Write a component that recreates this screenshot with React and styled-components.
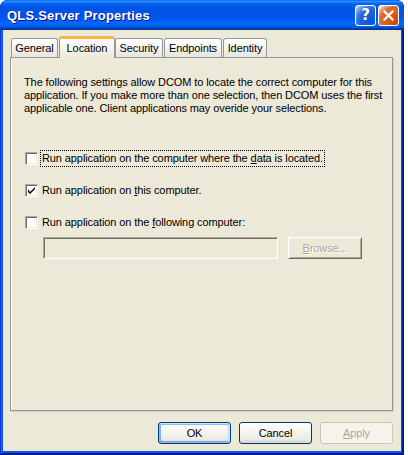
import styled, { createGlobalStyle } from "styled-components";

const tabs = [
  { name: "General", width: 47 },
  { name: "Location", width: 56 },
  { name: "Security", width: 48 },
  { name: "Endpoints", width: 58 },
  { name: "Identity", width: 44 },
];

function App() {
  return (
    <>
      <GlobalStyle />
      <Window>
        <TitleBar>
          <Title>QLS.Server Properties</Title>
          <CaptionButtons>
            <CaptionButton>
              <HelpGlyph>?</HelpGlyph>
            </CaptionButton>
            <CaptionButton $close>
              <svg width="11" height="11" viewBox="0 0 11 11">
                <path d="M1.5 1.5 L9.5 9.5 M9.5 1.5 L1.5 9.5" stroke="#fff" strokeWidth="2.2" strokeLinecap="square" />
              </svg>
            </CaptionButton>
          </CaptionButtons>
        </TitleBar>

        <Client>
          <TabRow>
            {tabs.map((t) => (
              <Tab key={t.name} $active={t.name === "Location"} $width={t.width}>
                {t.name}
              </Tab>
            ))}
          </TabRow>

          <Panel>
            <Intro>
              The following settings allow DCOM to locate the correct computer for this
              <br />
              application. If you make more than one selection, then DCOM uses the first
              <br />
              applicable one. Client applications may overide your selections.
            </Intro>

            <Options>
              <OptionRow>
                <CheckBox />
                <Label $focused>
                  Run application on the computer where the <Key>d</Key>ata is located.
                </Label>
              </OptionRow>
              <OptionRow>
                <CheckBox>
                  <svg width="7" height="7" viewBox="0 0 7 7">
                    <path d="M0 2 L0 5 L2 7 L7 2 L7 0 L2 5 Z" fill="#000" />
                  </svg>
                </CheckBox>
                <Label>
                  Run application on <Key>t</Key>his computer.
                </Label>
              </OptionRow>
              <OptionRow>
                <CheckBox />
                <Label>
                  Run application on the <Key>f</Key>ollowing computer:
                </Label>
              </OptionRow>
              <ComputerRow>
                <ComputerInput disabled />
                <ClassicButton disabled>
                  <Key>B</Key>rowse...
                </ClassicButton>
              </ComputerRow>
            </Options>
          </Panel>

          <ButtonRow>
            <PushButton $default>OK</PushButton>
            <PushButton>Cancel</PushButton>
            <PushButton disabled>
              <Key>A</Key>pply
            </PushButton>
          </ButtonRow>
        </Client>
      </Window>
    </>
  );
}

export default App;

// --- Styled Components ---

const GlobalStyle = createGlobalStyle`
  html, body {
    margin: 0;
    padding: 0;
    background: #ffffff;
  }
  body {
    font-family: "Liberation Sans", Arial, sans-serif;
    font-size: 11px;
    letter-spacing: -0.1px;
  }
`;

const Window = styled.div`
  width: 404px;
  height: 455px;
  box-sizing: border-box;
  display: flex;
  flex-direction: column;
  padding-bottom: 4px;
  background: #0855dd;
  border-radius: 8px 8px 0 0;
  overflow: hidden;
  box-shadow: inset -1px -1px #00138c, inset 1px 1px #0831d9,
    inset -2px -2px #001ea0, inset 2px 2px #166aee;
`;

const TitleBar = styled.div`
  height: 30px;
  flex: none;
  display: flex;
  align-items: center;
  justify-content: space-between;
  padding: 0 5px 0 7px;
  background: linear-gradient(
    180deg,
    #0058ee 0%,
    #3593ff 4%,
    #288eff 6%,
    #127dff 8%,
    #036ffc 10%,
    #0262ee 14%,
    #0057e5 20%,
    #0054e3 24%,
    #0055eb 56%,
    #005bf5 66%,
    #026afe 76%,
    #0062ef 86%,
    #0052d6 92%,
    #0040ab 94%,
    #003092 100%
  );
  border-radius: 8px 8px 0 0;
`;

const Title = styled.span`
  color: #ffffff;
  font-family: "Liberation Sans", Arial, sans-serif;
  font-weight: bold;
  font-size: 13px;
  letter-spacing: 0.2px;
  text-shadow: 1px 1px #0f1089;
  margin-top: 1px;
`;

const CaptionButtons = styled.div`
  display: flex;
  gap: 2px;
`;

const CaptionButton = styled.div`
  width: 21px;
  height: 21px;
  box-sizing: border-box;
  border: 1px solid #ffffff;
  border-radius: 3px;
  display: flex;
  align-items: center;
  justify-content: center;
  background: ${(p) =>
    p.$close
      ? "radial-gradient(circle at 90% 90%, #cc4600 0%, #dc6527 55%, #cd7546 70%, #ffccb2 90%, #fff 100%)"
      : "radial-gradient(circle at 90% 90%, #0054e9 0%, #2263d5 55%, #4479e4 70%, #a3bbec 90%, #fff 100%)"};
`;

const HelpGlyph = styled.span`
  color: #ffffff;
  font-family: "DejaVu Sans", sans-serif;
  font-weight: bold;
  font-size: 15px;
  line-height: 1;
`;

const Client = styled.div`
  flex: 1;
  margin: 0 3px;
  display: flex;
  flex-direction: column;
  padding: 6px 8px 7px 7px;
  background: #ece9d8;
  color: #000000;
`;

const TabRow = styled.div`
  height: 21px;
  display: flex;
  align-items: flex-end;
  padding-left: 1px;
  gap: 1px;
`;

const Tab = styled.div`
  position: relative;
  box-sizing: border-box;
  width: ${(p) => p.$width}px;
  height: ${(p) => (p.$active ? "22px" : "19px")};
  margin: ${(p) => (p.$active ? "0 -1px -1px 0" : "0")};
  z-index: ${(p) => (p.$active ? 1 : 0)};
  padding-top: 3px;
  text-align: center;
  border: 1px solid #919b9c;
  border-bottom: none;
  border-top: ${(p) => (p.$active ? "3px solid #f9b53f" : "1px solid #919b9c")};
  border-radius: 3px 3px 0 0;
  background: ${(p) =>
    p.$active
      ? "linear-gradient(180deg, #fcfcfe 0%, #f4f2ea 60%, #ece9d8 100%)"
      : "linear-gradient(180deg, #ffffff 0%, #f4f3ee 50%, #e7e5dc 100%)"};
  font-size: 11px;
  white-space: nowrap;
`;

const Panel = styled.div`
  flex: 1;
  box-sizing: border-box;
  border: 1px solid #919b9c;
  background: #ece9d8;
  padding: 18px 12px 0 13px;
  box-shadow: inset 1px 0 #fcfcfe, 1px 1px #d6d2c2;
`;

const Intro = styled.p`
  margin: 0;
  font-size: 11px;
  line-height: 13px;
  white-space: nowrap;
`;

const Options = styled.div`
  margin-top: 35px;
  display: flex;
  flex-direction: column;
  gap: 16px;
`;

const OptionRow = styled.div`
  height: 16px;
  display: flex;
  align-items: center;
  padding-left: 1px;
`;

const CheckBox = styled.span`
  width: 13px;
  height: 13px;
  box-sizing: border-box;
  flex: none;
  display: flex;
  align-items: center;
  justify-content: center;
  background: #ffffff;
  border: 1px solid;
  border-color: #aca899 #ffffff #ffffff #aca899;
  box-shadow: inset 1px 1px #716f64, inset -1px -1px #f1efe2;
  margin-right: 3px;
`;

const Label = styled.span`
  padding: 1px 1px;
  line-height: 13px;
  outline: ${(p) => (p.$focused ? "1px dotted #000" : "none")};
  outline-offset: 0;
`;

const Key = styled.span`
  text-decoration: underline;
`;

const ComputerRow = styled.div`
  display: flex;
  gap: 10px;
  margin-top: -9px;
  padding-left: 19px;
`;

const ComputerInput = styled.input`
  width: 235px;
  height: 22px;
  box-sizing: border-box;
  margin: 0;
  background: #ece9d8;
  border: 1px solid;
  border-color: #aca899 #ffffff #ffffff #aca899;
  box-shadow: inset 1px 1px #716f64, inset -1px -1px #f1efe2;
`;

const ClassicButton = styled.button`
  width: 74px;
  height: 22px;
  box-sizing: border-box;
  margin: 0;
  padding: 0;
  background: #ece9d8;
  border: 1px solid;
  border-color: #ffffff #716f64 #716f64 #ffffff;
  box-shadow: inset 1px 1px #f1efe2, inset -1px -1px #aca899;
  font-family: "Liberation Sans", Arial, sans-serif;
  font-size: 11px;
  letter-spacing: -0.1px;
  color: #aca899;
  text-shadow: 1px 1px #ffffff;
`;

const ButtonRow = styled.div`
  margin-top: 11px;
  display: flex;
  justify-content: flex-end;
  gap: 8px;
`;

const PushButton = styled.button`
  width: 73px;
  height: 22px;
  box-sizing: border-box;
  margin: 0;
  padding: 0;
  border-radius: 3px;
  border: 1px solid ${(p) => (p.disabled ? "#c9c7ba" : "#003c74")};
  background: ${(p) =>
    p.disabled
      ? "#f5f4ea"
      : "linear-gradient(180deg, #ffffff 0%, #f3f3ef 45%, #ecebe6 80%, #d6d0c5 100%)"};
  box-shadow: ${(p) =>
    p.$default
      ? "inset -1px 1px #cee7ff, inset 1px 2px #98b8ea, inset -2px 2px #bcd4f6, inset 1px -1px #89ade4, inset 2px -2px #89ade4"
      : "none"};
  font-family: "Liberation Sans", Arial, sans-serif;
  font-size: 11px;
  letter-spacing: -0.1px;
  color: ${(p) => (p.disabled ? "#aca899" : "#000000")};
`;
